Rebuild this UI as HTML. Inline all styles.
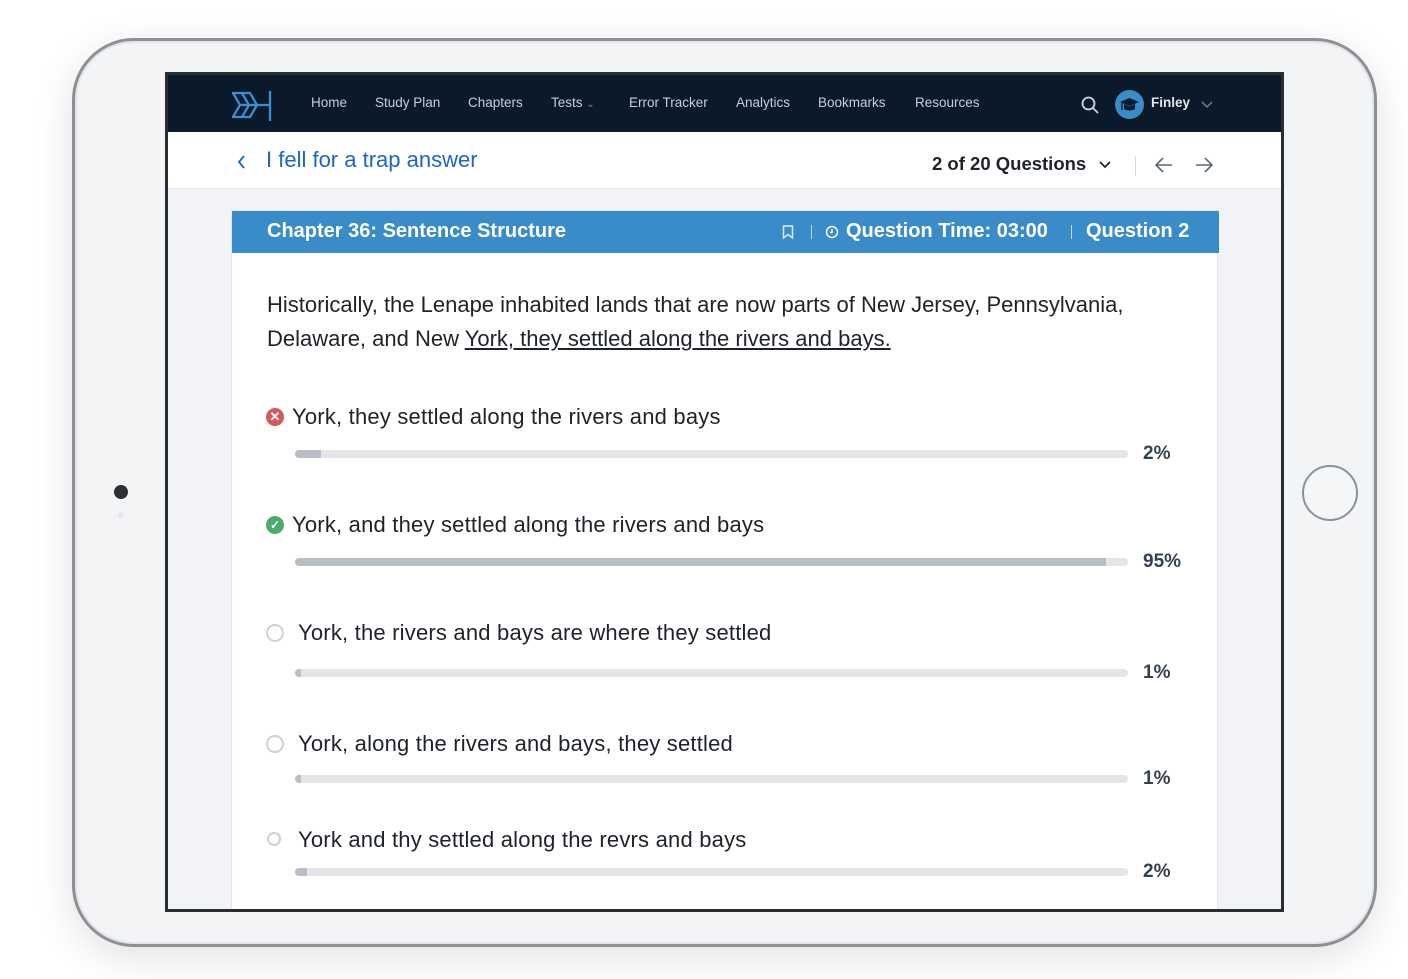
<!DOCTYPE html><html><head><style>
*{margin:0;padding:0;box-sizing:border-box}
body{width:1408px;height:979px;background:#fff;position:relative;overflow:hidden;font-family:"Liberation Sans",sans-serif}
.abs{position:absolute}
.frame{left:72px;top:38px;width:1305px;height:909px;border-radius:62px;background:#f3f4f6;border:3px solid #8d9096;box-shadow:0 10px 40px rgba(0,0,0,.12),inset 0 0 0 2px #e4e5e8}
.screen{left:165px;top:72px;width:1119px;height:840px;border:3px solid #2a2e33;background:#f1f3f6;overflow:hidden}
.nav{left:0;top:0;width:1113px;height:57px;background:#0a1a2a}
.nav span{position:absolute;top:20px;color:#c8ced6;font-size:13.5px}
.sub{left:0;top:57px;width:1113px;height:57px;background:#fff;border-bottom:1px solid #e6e9ee}
.card{left:63px;top:135px;width:987px;height:720px;background:#fff;border:1px solid #e3e7ec}
.ch{left:0;top:0;width:987px;height:42px;background:#3a8cc8;color:#fff;font-size:20px}
.q{font-size:22px;color:#1d2329}
.opt{position:absolute;left:60px;font-size:22px;color:#1d2329;letter-spacing:.2px}
.bar{position:absolute;left:63px;width:833px;height:8px;border-radius:4px;background:#e3e5e8;overflow:hidden}
.bar i{display:block;height:8px;background:#b7bec5}
.pct{position:absolute;left:911px;font-size:19px;color:#34414f;font-weight:bold}
.rad{position:absolute;left:34px;width:18px;height:18px;border-radius:50%;border:2px solid #cdd2d8}
</style></head><body>
<div class="abs frame"></div>
<div class="abs" style="left:114px;top:485px;width:14px;height:14px;border-radius:50%;background:#2b2f36"></div>
<div class="abs" style="left:118px;top:512px;width:6px;height:6px;border-radius:50%;background:#e6e7ea"></div>
<div class="abs" style="left:1302px;top:465px;width:56px;height:56px;border-radius:50%;border:2px solid #8e9196;background:#f5f6f8"></div>
<div class="abs screen">
 <div class="abs nav">
  <svg class="abs" style="left:64px;top:15px" width="42" height="32" viewBox="0 0 42 32" fill="none" stroke="#3a8fd0" stroke-width="2.3"><path d="M1 3h9l7 12-7 12H1l7-12z"/><path d="M10 3h8l7 12-7 12h-8"/><path d="M9 15h16"/><path d="M38 1v30M25 15h13"/></svg>
  <span style="left:143px">Home</span><span style="left:207px">Study Plan</span><span style="left:300px">Chapters</span><span style="left:383px">Tests <small style="font-size:10px;color:#7d8895">&#8964;</small></span>
  <span style="left:461px">Error Tracker</span><span style="left:568px">Analytics</span><span style="left:650px">Bookmarks</span><span style="left:747px">Resources</span>
  <svg class="abs" style="left:913px;top:21px" width="18" height="18" fill="none" stroke="#d0d5db" stroke-width="1.8"><circle cx="7.5" cy="7.5" r="6"/><path d="M12 12l5 5"/></svg>
  <div class="abs" style="left:947px;top:15px;width:29px;height:29px;border-radius:50%;background:#3a8cc8"><svg width="29" height="29"><path d="M5 12l9.5-4 9.5 4-9.5 4z" fill="#0a1a2a"/><path d="M9 14v5c3 2 8 2 11 0v-5l-5.5 2.5z" fill="#0a1a2a"/><path d="M7 13v7" stroke="#0a1a2a" stroke-width="1.3"/></svg></div>
  <span style="left:983px;color:#e4e8ec;font-weight:bold">Finley</span>
  <svg class="abs" style="left:1033px;top:26px" width="12" height="8" fill="none" stroke="#7d8895" stroke-width="1.3"><path d="M1 1l5 5 5-5"/></svg>
 </div>
 <div class="abs sub">
  <svg class="abs" style="left:69px;top:23px" width="9" height="14" fill="none" stroke="#1a66c9" stroke-width="1.8"><path d="M7 1L2 7l5 6"/></svg>
  <span class="abs" style="left:98px;top:15px;color:#1a66c9;font-size:22px">I fell for a trap answer</span>
  <span class="abs" style="left:764px;top:21px;color:#1d2329;font-size:18.5px;font-weight:bold">2 of 20 Questions</span>
  <svg class="abs" style="left:931px;top:29px" width="12" height="8" fill="none" stroke="#1d2329" stroke-width="1.7"><path d="M1 1l5 5 5-5"/></svg>
  <div class="abs" style="left:967px;top:24px;width:1px;height:20px;background:#d5d9de"></div>
  <svg class="abs" style="left:986px;top:24px" width="20" height="18" fill="none" stroke="#5b6878" stroke-width="1.6"><path d="M18 9H2M9 2L2 9l7 7"/></svg>
  <svg class="abs" style="left:1026px;top:24px" width="20" height="18" fill="none" stroke="#5b6878" stroke-width="1.6"><path d="M2 9h16M11 2l7 7-7 7"/></svg>
 </div>
 <div class="abs card">
  <div class="abs ch">
   <span class="abs" style="left:35px;top:9px;font-weight:bold">Chapter 36: Sentence Structure</span>
   <svg class="abs" style="left:550px;top:14px" width="12" height="15" fill="none" stroke="#dce9f5" stroke-width="1.5"><path d="M1.5 1h9v12l-4.5-3.5L1.5 13z"/></svg>
   <div class="abs" style="left:579px;top:14px;width:1px;height:14px;background:#bcd7ee"></div>
   <svg class="abs" style="left:593px;top:14px" width="14" height="14" fill="none" stroke="#fff" stroke-width="1.4"><circle cx="7" cy="7" r="5.5"/><path d="M7 4v3.5H5"/></svg>
   <span class="abs" style="left:614px;top:9px;font-weight:bold">Question Time: 03:00</span>
   <div class="abs" style="left:839px;top:14px;width:1px;height:14px;background:#bcd7ee"></div>
   <span class="abs" style="left:854px;top:9px;font-weight:bold">Question 2</span>
  </div>
  <div class="abs q" style="left:35px;top:77px;line-height:34px;width:900px">Historically, the Lenape inhabited lands that are now parts of New Jersey, Pennsylvania, Delaware, and New <u>York, they settled along the rivers and bays.</u></div>
  <div class="abs" style="left:34px;top:197px;width:18px;height:18px;border-radius:50%;background:#d25a5a;color:#fff;font-size:13px;line-height:18px;text-align:center;font-weight:bold">&#10005;</div>
  <div class="opt" style="top:193px">York, they settled along the rivers and bays</div>
  <div class="bar" style="top:239px"><i style="width:26px"></i></div><div class="pct" style="top:232px">2%</div>
  <div class="abs" style="left:34px;top:305px;width:18px;height:18px;border-radius:50%;background:#4faa6e;color:#fff;font-size:12px;line-height:18px;text-align:center;font-weight:bold">&#10003;</div>
  <div class="opt" style="top:301px">York, and they settled along the rivers and bays</div>
  <div class="bar" style="top:347px"><i style="width:811px"></i></div><div class="pct" style="top:340px">95%</div>
  <div class="rad" style="top:413px"></div>
  <div class="opt" style="top:409px;left:66px">York, the rivers and bays are where they settled</div>
  <div class="bar" style="top:458px"><i style="width:6px"></i></div><div class="pct" style="top:451px">1%</div>
  <div class="rad" style="top:524px"></div>
  <div class="opt" style="top:520px;left:66px">York, along the rivers and bays, they settled</div>
  <div class="bar" style="top:564px"><i style="width:6px"></i></div><div class="pct" style="top:557px">1%</div>
  <div class="rad" style="top:621px;left:35px;width:14px;height:14px"></div>
  <div class="opt" style="top:616px;left:66px">York and thy settled along the revrs and bays</div>
  <div class="bar" style="top:657px"><i style="width:12px"></i></div><div class="pct" style="top:650px">2%</div>
 </div>
</div>
</body></html>
